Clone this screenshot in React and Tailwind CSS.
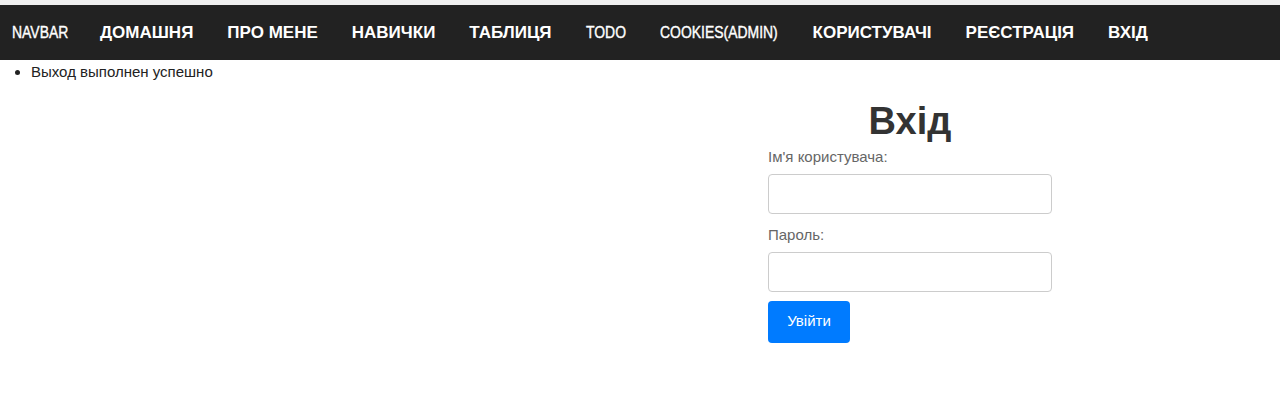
import React from 'react';

const links = [
  { label: 'ДОМАШНЯ' },
  { label: 'ПРО МЕНЕ' },
  { label: 'НАВИЧКИ' },
  { label: 'ТАБЛИЦЯ' },
  { label: 'TODO', w: 'w-[40px]' },
  { label: 'COOKIES(ADMIN)', w: 'w-[119px]' },
  { label: 'КОРИСТУВАЧІ' },
  { label: 'РЕЄСТРАЦІЯ' },
  { label: 'ВХІД' },
];

// latin items render in a narrow face in the original, so squash them
function Narrow({ children, w }) {
  return (
    <span className={`inline-block ${w} whitespace-nowrap`}>
      <span className="inline-block origin-left scale-x-[0.82] text-[17px] [-webkit-text-stroke:0.4px_white]">
        {children}
      </span>
    </span>
  );
}

export default function App() {
  return (
    <div className="min-h-[400px] bg-white font-['Liberation_Sans',Arial,sans-serif] text-[#333]">
      <div className="h-[5px] bg-[#f0f0f0]" />
      <nav className="flex items-center h-[55px] bg-[#222] text-white pl-[12px]">
        <span className="mr-[32px]">
          <Narrow w="w-[56px]">NAVBAR</Narrow>
        </span>
        <div className="flex items-center gap-[34px]">
          {links.map((l) => (
            <a key={l.label} href="#" className="flex">
              {l.w ? (
                <Narrow w={l.w}>{l.label}</Narrow>
              ) : (
                <span className="text-[17px] font-bold">{l.label}</span>
              )}
            </a>
          ))}
        </div>
      </nav>
      <ul className="list-disc pl-[31px] mt-[1px] text-[15px] text-[#222]">
        <li>Выход выполнен успешно</li>
      </ul>
      <div className="ml-[768px] w-[284px] mt-[15px]">
        <h2 className="text-center text-[38px] font-bold leading-[44px] text-[#333]">Вхід</h2>
        <form onSubmit={(e) => e.preventDefault()}>
          <label className="block text-[15px] text-[#666] mt-[3px] mb-[6px]">Ім'я користувача:</label>
          <input
            type="text"
            className="block w-full h-[40px] border border-[#ccc] rounded-[4px] px-2 outline-none"
          />
          <label className="block text-[15px] text-[#666] mt-[10px] mb-[5px]">Пароль:</label>
          <input
            type="password"
            className="block w-full h-[40px] border border-[#ccc] rounded-[4px] px-2 outline-none"
          />
          <button
            type="submit"
            className="mt-[9px] w-[82px] h-[42px] bg-[#007bff] text-white text-[15px] rounded-[4px]"
          >
            Увійти
          </button>
        </form>
      </div>
    </div>
  );
}
